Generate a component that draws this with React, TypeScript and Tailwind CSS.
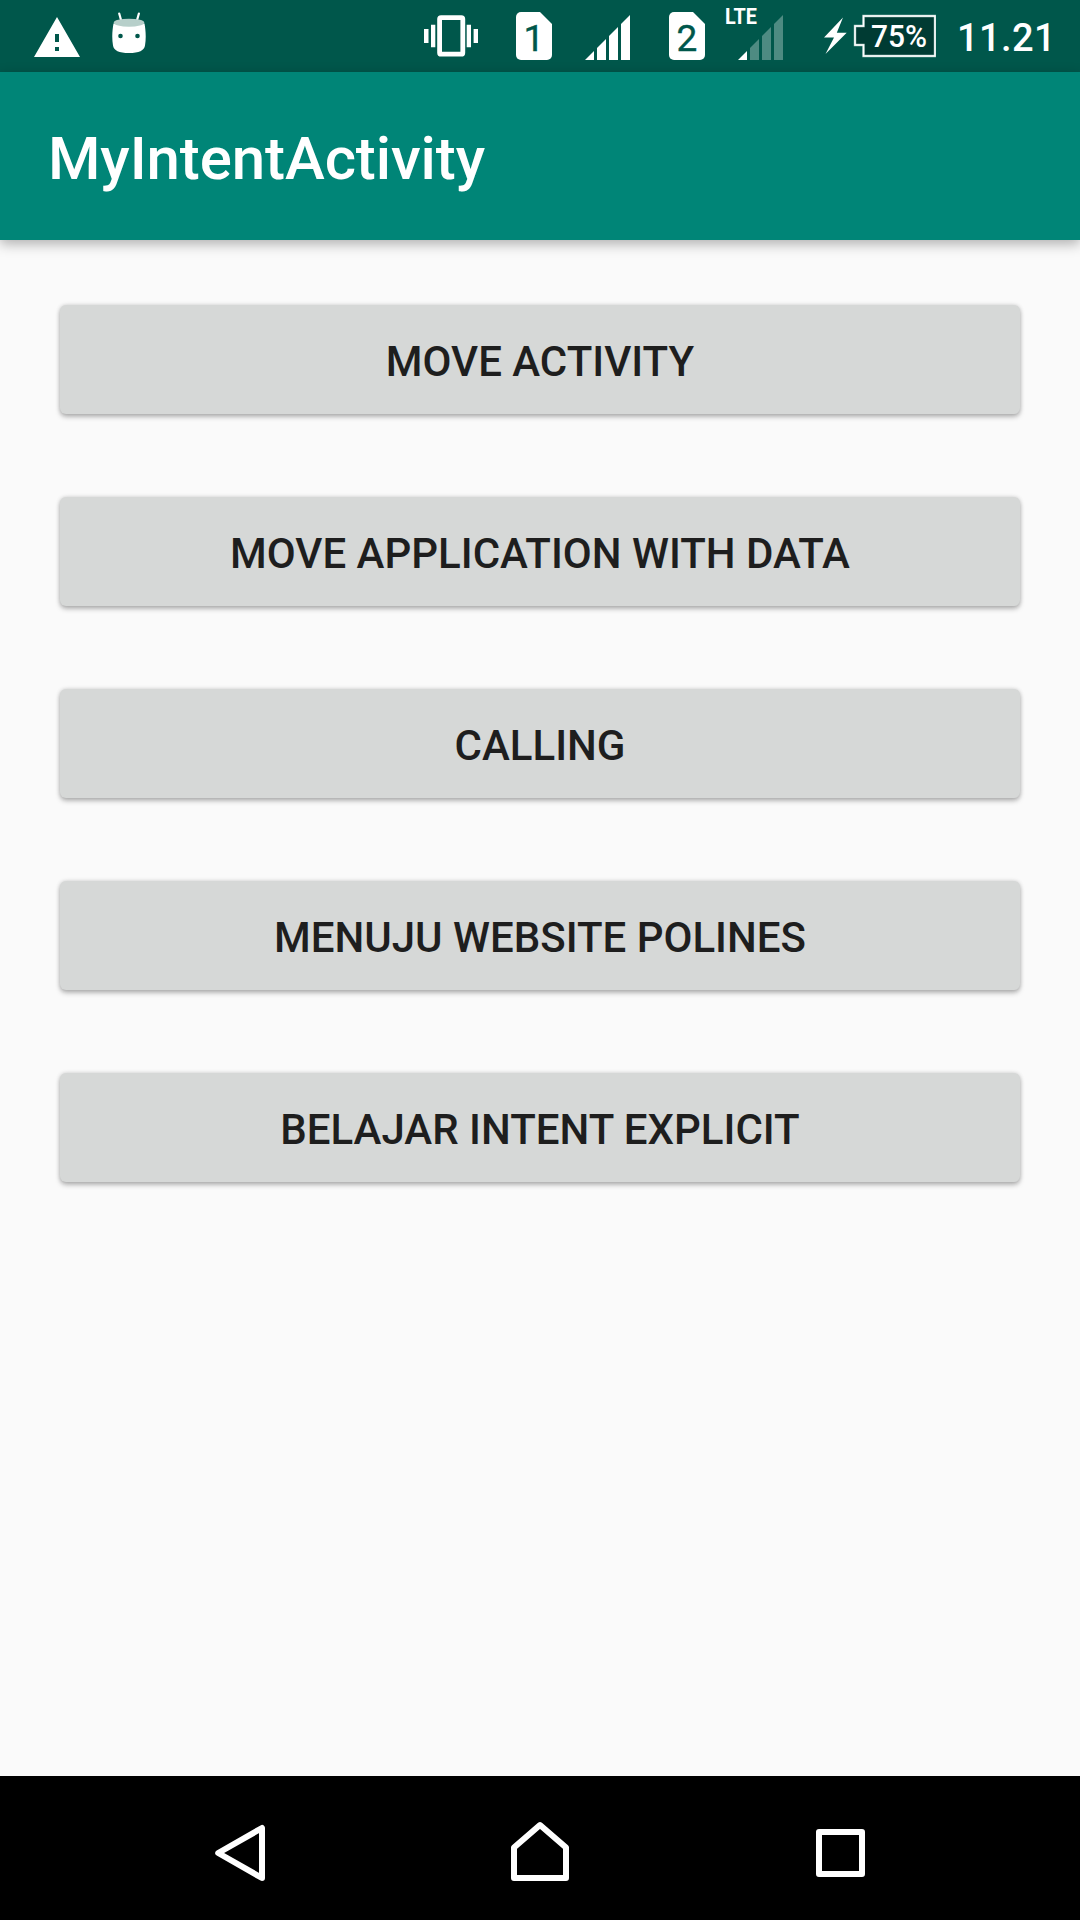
import React from "react";

const actions = [
  "MOVE ACTIVITY",
  "MOVE APPLICATION WITH DATA",
  "CALLING",
  "MENUJU WEBSITE POLINES",
  "BELAJAR INTENT EXPLICIT",
];

function WarningIcon() {
  return (
    <svg className="ml-[34px] h-[72px] w-[46px] shrink-0" viewBox="34 0 46 72">
      <path fill="#fff" fillRule="evenodd" d="M57 17 80 57H34ZM55 34v8h4v-8ZM55 47v4h4v-4Z" />
    </svg>
  );
}

function MarshmallowIcon() {
  return (
    <svg className="ml-[32px] h-[72px] w-[34px] shrink-0" viewBox="112 0 34 72">
      <path d="M119.2 13.5 121.3 21M138.9 13.5 136.8 21" stroke="#fff" strokeWidth="2.2" strokeLinecap="round" />
      <path
        fill="#fff"
        d="M113.5 23.5C112.3 30 111.7 38 113 45.500C113.700 50.500 119 53 129 53S144.300 50.500 145 45.500C146.300 38 145.700 30 144.500 23.500Z"
      />
      <ellipse cx="129" cy="22.700" rx="15.300" ry="4" fill="#b7cfca" />
      <circle cx="120.500" cy="36" r="2.300" fill="#00574b" />
      <circle cx="137.500" cy="36" r="2.300" fill="#00574b" />
    </svg>
  );
}

function VibrateIcon() {
  return (
    <svg className="h-[72px] w-[54px] shrink-0" viewBox="424 0 54 72">
      <rect x="439.600" y="17.600" width="23.200" height="36.600" rx="1.500" fill="none" stroke="#fff" strokeWidth="4.800" />
      <path fill="#fff" d="M424 29h4.500v14H424ZM431 24.700h4.300v22.600H431ZM466.700 24.700h4.300v22.600h-4.300ZM473.600 29h4.400v14h-4.400Z" />
    </svg>
  );
}

function SimCard({ slot, className }: { slot: string; className: string }) {
  return (
    <svg className={`h-[72px] w-[36px] shrink-0 ${className}`} viewBox="0 0 36 72">
      <path fill="#fff" d="M5 12H24L36 24V55a5 5 0 0 1-5 5H5a5 5 0 0 1-5-5V17a5 5 0 0 1 5-5Z" />
      <text
        x="18"
        y="51"
        textAnchor="middle"
        fill="#00574b"
        stroke="#00574b"
        strokeWidth="0.4"
        fontSize="37"
        fontWeight="400"
        fontFamily="Roboto, sans-serif"
      >
        {slot}
      </text>
    </svg>
  );
}

function SignalIcon({ level, className }: { level: number; className: string }) {
  const bars = [
    "M0 60 9 51V60Z",
    "M12 60V48L21 39V60Z",
    "M24 60V36L33 27V60Z",
    "M36 60V24L45 15V60Z",
  ];
  return (
    <svg className={`h-[72px] w-[45px] shrink-0 ${className}`} viewBox="0 0 45 72">
      {bars.map((d, i) => (
        <path key={d} d={d} fill={i < level ? "#fff" : "#4e8b82"} />
      ))}
    </svg>
  );
}

function BatteryIcon() {
  return (
    <svg className="ml-[41px] h-[72px] w-[112px] shrink-0" viewBox="824 0 112 72">
      <path fill="#fff" d="M843 17.500 824 37.500H834L825.500 54 846.700 32.800H836.800Z" />
      <path d="M863.500 16H935V56H863.500V45H855V26H863.500Z" fill="#003b33" stroke="#a5c4bf" strokeWidth="2.400" />
      <path d="M863.500 16H935V56H863.500V45H855V26H863.500Z" fill="none" stroke="#fff" strokeWidth="1.400" />
      <text
        x="871"
        y="46.500"
        textLength="56"
        lengthAdjust="spacingAndGlyphs"
        fill="#fff"
        fontSize="32"
        fontWeight="500"
        fontFamily="Roboto, sans-serif"
      >
        75%
      </text>
    </svg>
  );
}

function StatusBar() {
  return (
    <div className="flex h-[72px] items-center bg-[#00574b] text-white">
      <WarningIcon />
      <MarshmallowIcon />
      <div className="ml-auto flex items-center">
        <VibrateIcon />
        <SimCard slot="1" className="ml-[38px]" />
        <SignalIcon level={4} className="ml-[33px]" />
        <SimCard slot="2" className="ml-[39px]" />
        <div className="relative ml-[33px] h-[72px] w-[45px]">
          <SignalIcon level={1} className="" />
          <span className="absolute -left-[13px] top-[4px] origin-left scale-x-[0.92] text-[21.500px] leading-[25px] font-bold">LTE</span>
        </div>
        <BatteryIcon />
        <span className="ml-[21px] w-[123px] pt-[4px] text-[38px] leading-none font-medium tracking-[0.400px]">11.21</span>
      </div>
    </div>
  );
}

function NavigationBar() {
  return (
    <nav className="flex h-[144px] items-center bg-black">
      <button aria-label="Back" className="ml-[210px]">
        <svg className="h-[72px] w-[60px]" viewBox="210 1812 60 72" fill="none" stroke="#fff" strokeWidth="6" strokeLinejoin="round">
          <path d="M262 1828V1878L218.200 1853Z" />
        </svg>
      </button>
      <button aria-label="Home" className="ml-[240px]">
        <svg className="h-[72px] w-[60px]" viewBox="510 1812 60 72" fill="none" stroke="#fff" strokeWidth="6" strokeLinejoin="round">
          <path d="M540 1825 566 1847.500V1878H514V1847.500Z" />
        </svg>
      </button>
      <button aria-label="Recent apps" className="ml-[240px]">
        <svg className="h-[72px] w-[60px]" viewBox="810 1812 60 72" fill="none" stroke="#fff" strokeWidth="6" strokeLinejoin="round">
          <path d="M819 1832H862V1874H819Z" />
        </svg>
      </button>
    </nav>
  );
}

export default function App() {
  return (
    <div className="flex h-[1920px] w-[1080px] flex-col bg-[#fafafa] font-[Roboto,sans-serif]">
      <StatusBar />
      <header className="flex h-[168px] items-center bg-[#008577] px-12 pt-1.5 text-white shadow-[0_4px_12px_rgba(0,0,0,0.3)]">
        <h1 className="text-[60px] leading-none font-medium tracking-[-0.100px]">MyIntentActivity</h1>
      </header>
      <main className="flex flex-1 flex-col gap-[83px] px-[60px] pt-[65px]">
        {actions.map((label) => (
          <button
            key={label}
            className="flex h-[109px] items-center justify-center rounded-[6px] bg-[#d6d8d7] pt-[4px] text-[42px] leading-none font-medium text-[#1e1e1e] shadow-[0_3px_5px_rgba(0,0,0,0.26),0_0_4px_rgba(0,0,0,0.16)]"
          >
            {label}
          </button>
        ))}
      </main>
      <NavigationBar />
    </div>
  );
}
